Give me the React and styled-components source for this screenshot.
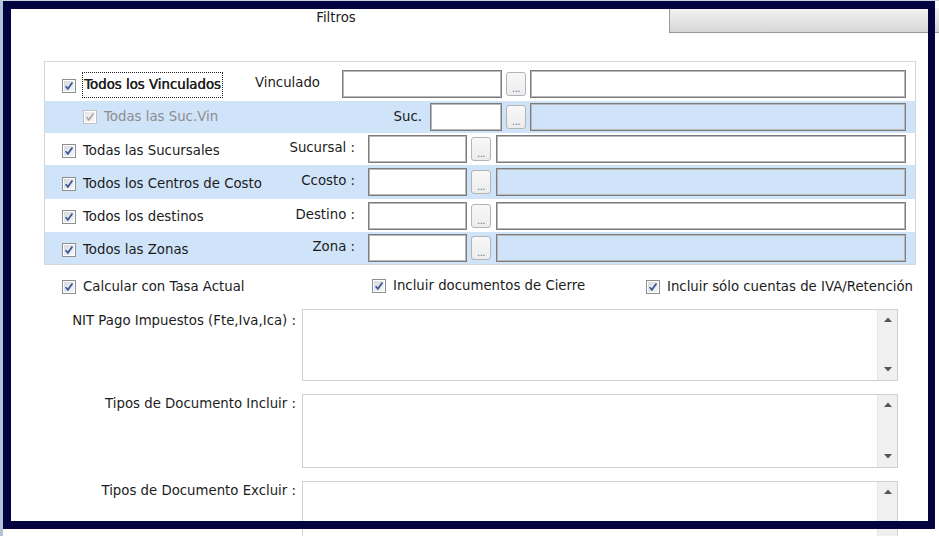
import React from 'react';
import styled, { createGlobalStyle } from 'styled-components';

const GlobalStyle = createGlobalStyle`
  html, body {
    margin: 0;
    padding: 0;
    overflow: hidden;
    background: #fff;
  }
  body {
    font-family: 'DejaVu Sans', Tahoma, sans-serif;
    font-size: 13.3px;
    line-height: 16px;
    color: #1c1c1c;
  }
`;

const Window = styled.div`
  position: relative;
  width: 939px;
  height: 536px;
  box-sizing: border-box;
  border-left: 3px solid #b3c3d9;
  border-top: 1px solid #c9d3e0;
  background: #fff;
  overflow: hidden;
`;

/* selection frame drawn over the whole panel */
const Frame = styled.div`
  position: absolute;
  left: 0;
  top: 0;
  width: 932px;
  height: 528px;
  box-sizing: border-box;
  border: 8px solid #03033f;
  border-right-width: 7px;
  pointer-events: none;
  z-index: 5;
`;

const TabStrip = styled.div`
  display: flex;
  height: 32px;
`;

const ActiveTab = styled.div`
  width: 666px;
  box-sizing: border-box;
  padding-top: 9px;
  text-align: center;
`;

const InactiveTab = styled.div`
  flex: 1;
  margin-top: 7px;
  border-left: 1px solid #9a9a9a;
  border-bottom: 1px solid #9a9a9a;
  background: linear-gradient(#f3f3f3, #e6e6e6 45%, #d6d6d6);
`;

const Body = styled.div`
  padding: 28px 0 0 41px;
`;

const Group = styled.div`
  width: 872px;
  box-sizing: border-box;
  border: 1px solid #d6d6d6;
`;

const Row = styled.div`
  display: flex;
  align-items: center;
  box-sizing: border-box;
  height: ${p => p.$h}px;
  padding-top: ${p => p.$top || 0}px;
  background: ${p => (p.$tint ? '#cfe3f9' : '#fff')};
`;

const CheckCell = styled.div`
  width: 184px;
  flex: none;
  box-sizing: border-box;
  display: flex;
  align-items: center;
  gap: ${p => (p.$focus ? 6 : 7)}px;
  padding: ${p => p.$pt}px 0 0 ${p => p.$indent}px;
  white-space: nowrap;
  color: ${p => (p.$disabled ? '#8e8e8e' : 'inherit')};
`;

const FocusText = styled.span`
  border: 1px dotted #222;
  padding: 4px 1px;
  margin-top: -2px;
  text-shadow: 0.5px 0 0 currentColor;
`;

const FieldLabel = styled.div`
  width: ${p => p.$w}px;
  flex: none;
  text-align: right;
  white-space: nowrap;
  padding-bottom: ${p => p.$lift || 0}px;
`;

const TextBox = styled.div`
  flex: ${p => (p.$w ? 'none' : 1)};
  width: ${p => (p.$w ? `${p.$w}px` : 'auto')};
  height: 28px;
  box-sizing: border-box;
  margin-left: ${p => p.$ml || 0}px;
  margin-right: ${p => p.$mr || 0}px;
  border: 1px solid #7c7c7c;
  box-shadow: inset 0 0 0 1px #b9b9b9;
  background: ${p => (p.$off ? '#cfe3f9' : '#fff')};
`;

const Ellipsis = styled.div`
  flex: none;
  width: 20px;
  height: 24px;
  box-sizing: border-box;
  margin: 0 ${p => p.$mr}px 0 4px;
  border: 1px solid #b4b4b4;
  border-radius: 3px;
  background: linear-gradient(#f8f8f8, #ececec);
  display: flex;
  justify-content: center;
  align-items: flex-end;
  font-size: 10px;
  line-height: 12px;
  letter-spacing: -0.5px;
  color: #6075a6;
`;

const Options = styled.div`
  display: grid;
  grid-template-columns: 310px 274px auto;
  margin-top: 14px;
  padding-left: 18px;
  white-space: nowrap;
`;

const Option = styled.label`
  display: flex;
  align-items: center;
  gap: 7px;
  margin-top: ${p => (p.$up ? -2 : 0)}px;
`;

const Memo = styled.div`
  display: flex;
  align-items: flex-start;
  margin-top: ${p => p.$mt}px;
`;

const MemoLabel = styled.div`
  width: 252px;
  flex: none;
  text-align: right;
  white-space: nowrap;
  padding-top: ${p => p.$pt}px;
`;

const MemoBox = styled.div`
  display: flex;
  width: 596px;
  height: ${p => p.$h}px;
  margin-left: 6px;
  box-sizing: border-box;
  border: 1px solid #d0d0d0;
  background: #fff;
`;

const MemoArea = styled.div`
  flex: 1;
`;

const ScrollBar = styled.div`
  width: 20px;
  display: flex;
  flex-direction: column;
  justify-content: space-between;
  align-items: center;
  padding: 7px 0 8px;
  box-sizing: border-box;
  background: #f0f0f0;
  border-left: 1px solid #e6e6e6;
`;

const CheckBox = ({ disabled }) => (
  <svg width="14" height="14" viewBox="0 0 14 14" style={{ flex: 'none' }}>
    <defs>
      <linearGradient id={disabled ? 'cbOff' : 'cbOn'} x1="0" y1="0" x2="1" y2="1">
        <stop offset="0" stopColor={disabled ? '#e6e6e6' : '#d6d9de'} />
        <stop offset="1" stopColor={disabled ? '#f7f7f7' : '#f5f6f7'} />
      </linearGradient>
    </defs>
    <rect x="0.5" y="0.5" width="13" height="13" fill="#fff" stroke={disabled ? '#c2c2c2' : '#8e8f8f'} />
    <rect x="2" y="2" width="10" height="10" fill={`url(#${disabled ? 'cbOff' : 'cbOn'})`} />
    <path
      d="M3.6 7.2 L5.9 9.8 L10.4 3.6"
      fill="none"
      stroke={disabled ? '#a9a9a9' : '#3b5498'}
      strokeWidth="1.7"
    />
  </svg>
);

const Arrow = ({ down }) => (
  <svg width="8" height="5" viewBox="0 0 8 5">
    <path d={down ? 'M0 0 H8 L4 4.5 Z' : 'M0 5 H8 L4 0.5 Z'} fill="#555" />
  </svg>
);

const rows = [
  { check: 'Todos los Vinculados', focus: true, label: 'Vinculado', labelW: 91, lift: 3, gap: 22, w: 160, btnGap: 4, h: 39, top: 5, pt: 3 },
  { check: 'Todas las Suc.Vin', disabled: true, indent: 38, label: 'Suc.', labelW: 193, gap: 8, w: 72, btnGap: 4, h: 32, tint: true, off: true, pt: 0 },
  { check: 'Todas las Sucursales', label: 'Sucursal :', labelW: 126, lift: 2, gap: 13, w: 99, btnGap: 5, h: 32, pt: 3 },
  { check: 'Todos los Centros de Costo', label: 'Ccosto :', labelW: 126, lift: 2, gap: 13, w: 99, btnGap: 5, h: 34, tint: true, off: true, pt: 3 },
  { check: 'Todos los destinos', label: 'Destino :', labelW: 126, lift: 2, gap: 13, w: 99, btnGap: 5, h: 33, pt: 3 },
  { check: 'Todos las Zonas', label: 'Zona :', labelW: 126, lift: 2, gap: 13, w: 99, btnGap: 5, h: 32, tint: true, off: true, pt: 3 },
];

const memos = [
  { label: 'NIT Pago Impuestos (Fte,Iva,Ica) :', h: 72, mt: 14, pt: 4 },
  { label: 'Tipos de Documento Incluir :', h: 74, mt: 13, pt: 2 },
  { label: 'Tipos de Documento Excluir :', h: 74, mt: 13, pt: 2 },
];

const FilterRow = ({ r }) => (
  <Row $h={r.h} $top={r.top} $tint={r.tint}>
    <CheckCell $indent={r.indent || 17} $pt={r.pt} $disabled={r.disabled} $focus={r.focus}>
      <CheckBox disabled={r.disabled} />
      {r.focus ? <FocusText>{r.check}</FocusText> : <span>{r.check}</span>}
    </CheckCell>
    <FieldLabel $w={r.labelW} $lift={r.lift}>{r.label}</FieldLabel>
    <TextBox $w={r.w} $ml={r.gap} />
    <Ellipsis $mr={r.btnGap}>...</Ellipsis>
    <TextBox $off={r.off} $mr={9} />
  </Row>
);

export default function App() {
  return (
    <>
      <GlobalStyle />
      <Window>
        <TabStrip>
          <ActiveTab>Filtros</ActiveTab>
          <InactiveTab />
        </TabStrip>
        <Body>
          <Group>
            {rows.map(r => (
              <FilterRow key={r.check} r={r} />
            ))}
          </Group>
          <Options>
            <Option>
              <CheckBox />
              Calcular con Tasa Actual
            </Option>
            <Option $up>
              <CheckBox />
              Incluir documentos de Cierre
            </Option>
            <Option>
              <CheckBox />
              Incluir sólo cuentas de IVA/Retención
            </Option>
          </Options>
          {memos.map(m => (
            <Memo key={m.label} $mt={m.mt}>
              <MemoLabel $pt={m.pt}>{m.label}</MemoLabel>
              <MemoBox $h={m.h}>
                <MemoArea />
                <ScrollBar>
                  <Arrow />
                  <Arrow down />
                </ScrollBar>
              </MemoBox>
            </Memo>
          ))}
        </Body>
        <Frame />
      </Window>
    </>
  );
}
